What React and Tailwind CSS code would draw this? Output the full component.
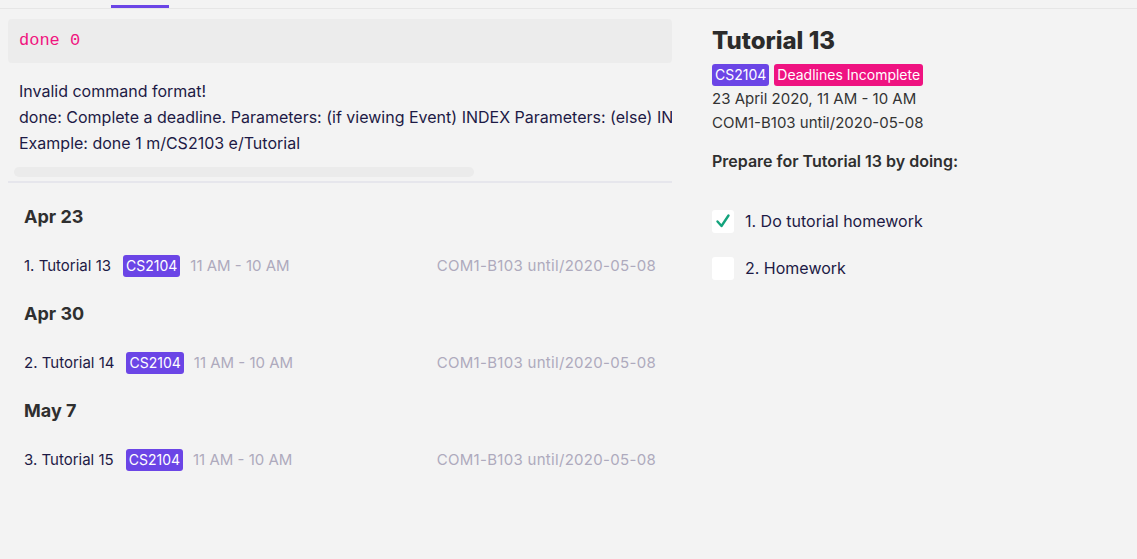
import React from 'react';

const events = [
  { date: 'Apr 23', name: '1. Tutorial 13' },
  { date: 'Apr 30', name: '2. Tutorial 14' },
  { date: 'May 7', name: '3. Tutorial 15' },
];

const Badge = ({ children, color = 'bg-[#6b45e6]' }) => (
  <span className={`${color} text-white text-[14px] leading-[22px] h-[22px] px-[3px] rounded-[3px] inline-flex items-center`}>
    {children}
  </span>
);

const Check = ({ done, label }) => (
  <div className="flex items-center gap-[11px]">
    <div className="w-[22px] h-[23px] bg-white rounded-[3px] flex items-center justify-center">
      {done && (
        <svg width="16" height="16" viewBox="0 0 16 16" fill="none">
          <path d="M2.5 8.5 L6.5 13 L13.5 2.5" stroke="#13a37c" strokeWidth="2.4" strokeLinecap="round" strokeLinejoin="round" />
        </svg>
      )}
    </div>
    <span className="text-[16px] text-[#1d1a45]">{label}</span>
  </div>
);

const App = () => {
  return (
    <div className="min-h-screen w-full bg-[#f3f3f3] font-['Inter',sans-serif] overflow-hidden">
      {/* tab strip */}
      <div className="h-[9px] border-b border-[#e6e6e6] pl-[111px] flex">
        <div className="w-[58px] h-[3px] mt-[5px] bg-[#6b45e6]" />
      </div>

      <div className="flex">
        {/* Left panel */}
        <div className="w-[664px] ml-[8px] shrink-0">
          <div className="mt-[10px] h-[44px] rounded-[4px] bg-[#ececec] flex items-center pl-[11px]">
            <span className="font-['Liberation_Mono',monospace] text-[17px] text-[#f0157f]">done 0</span>
          </div>

          <div className="pl-[11px] pt-[15px] text-[16px] leading-[26px] text-[#1d1a45] whitespace-nowrap overflow-hidden">
            <div>Invalid command format!</div>
            <div>done: Complete a deadline. Parameters: (if viewing Event) INDEX Parameters: (else) INDEX m/MODULE_CODE e/EVENT_NAME</div>
            <div>Example: done 1 m/CS2103 e/Tutorial</div>
          </div>

          <div className="mt-[11px] ml-[6px] w-[460px] h-[10px] rounded-[5px] bg-[#ebebeb]" />
          <div className="mt-[4px] h-[2px] bg-[#e6e6ec]" />

          <div className="px-[16px] pt-[22px]">
            {events.map((e) => (
              <div key={e.date} className="mb-[24px]">
                <div className="text-[18px] leading-[24px] font-bold text-[#2f2f2f]">{e.date}</div>
                <div className="mt-[25px] h-[24px] flex items-center justify-between text-[15px]">
                  <div className="flex items-center">
                    <span className="text-[#1d1a45]">{e.name}</span>
                    <span className="ml-[12px]"><Badge>CS2104</Badge></span>
                    <span className="ml-[10px] text-[#aeaabd]">11 AM - 10 AM</span>
                  </div>
                  <span className="text-[#aeaabd] tracking-[0.02em]">COM1-B103 until/2020-05-08</span>
                </div>
              </div>
            ))}
          </div>
        </div>

        {/* Right panel */}
        <div className="ml-[40px] pt-[16px]">
          <h1 className="text-[24px] leading-[32px] font-extrabold text-[#2b2b2b]">Tutorial 13</h1>
          <div className="mt-[7px] flex gap-[5px]">
            <Badge>CS2104</Badge>
            <Badge color="bg-[#ef1381]">Deadlines Incomplete</Badge>
          </div>
          <div className="mt-[1px] text-[15px] leading-[24px] text-[#333333]">
            <div>23 April 2020, 11 AM - 10 AM</div>
            <div>COM1-B103 until/2020-05-08</div>
          </div>
          <div className="mt-[14px] text-[16px] font-semibold text-[#2f2f2f]">Prepare for Tutorial 13 by doing:</div>
          <div className="mt-[36px] flex flex-col gap-[23px]">
            <Check done label="1. Do tutorial homework" />
            <Check label="2. Homework" />
          </div>
        </div>
      </div>
    </div>
  );
};

export default App;
